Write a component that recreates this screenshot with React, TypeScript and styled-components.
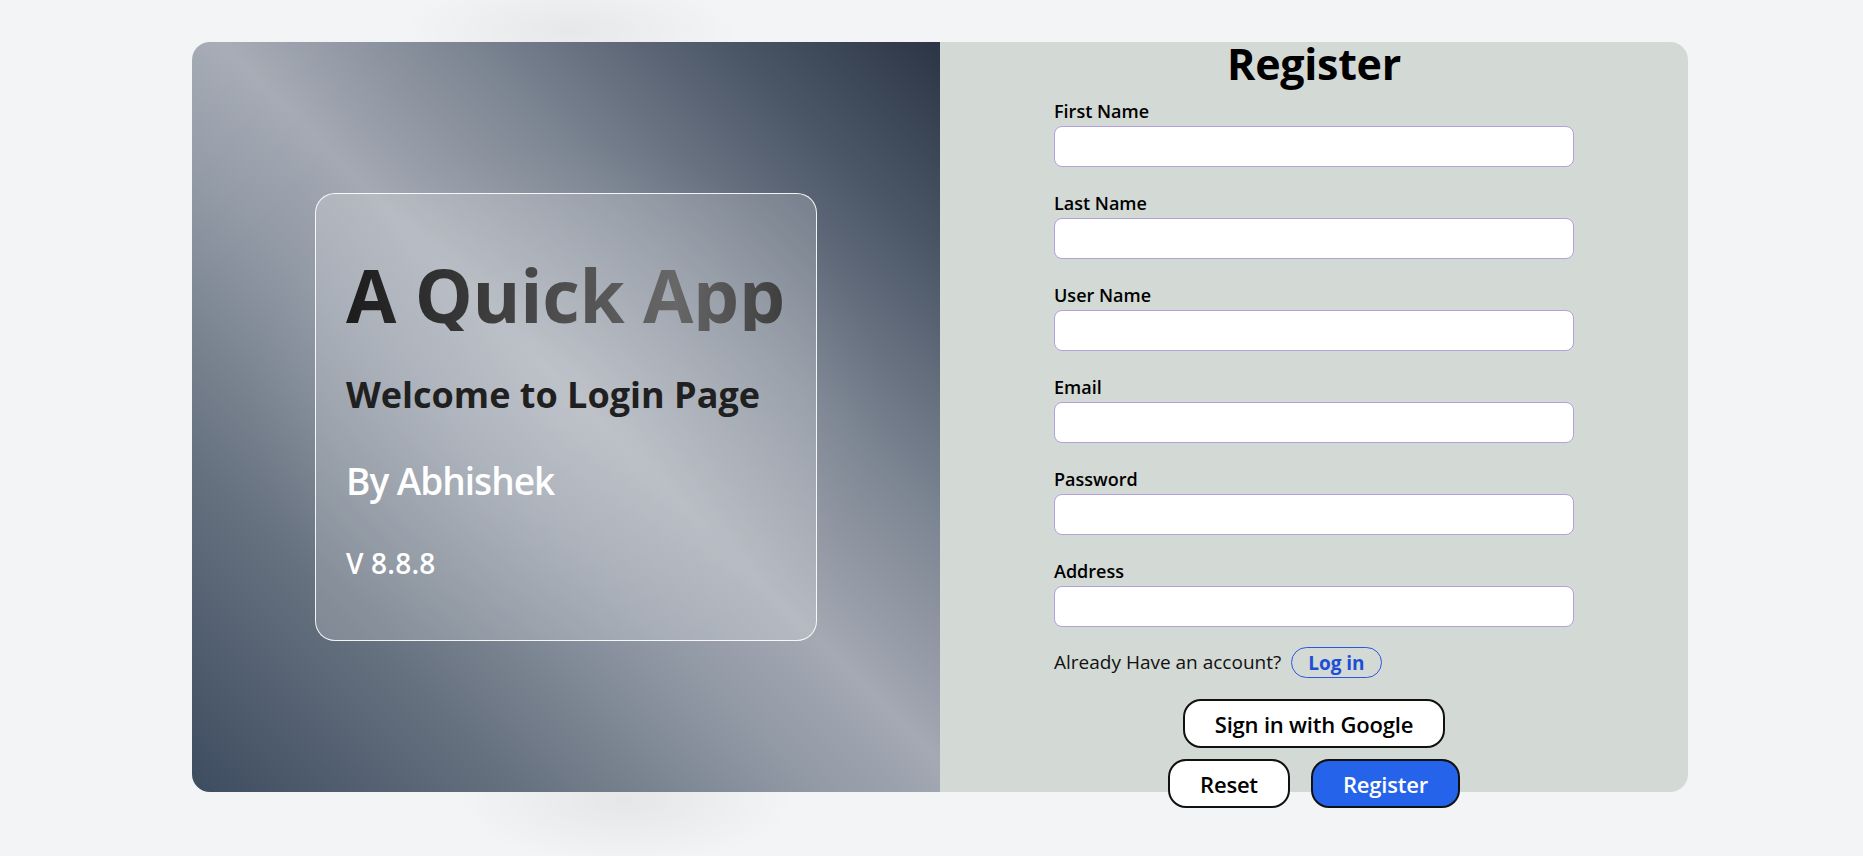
import React from "react";
import styled, { createGlobalStyle } from "styled-components";

const GlobalStyle = createGlobalStyle`
  html, body { margin: 0; padding: 0; }
  body {
    background-color: #f3f4f6;
    background-image:
      radial-gradient(ellipse 170px 55px at 570px 30px, rgba(0,0,0,0.05), rgba(0,0,0,0) 100%),
      radial-gradient(ellipse 170px 65px at 625px 800px, rgba(0,0,0,0.06), rgba(0,0,0,0) 100%);
    background-repeat: no-repeat;
    font-family: "Open Sans", "Noto Sans", sans-serif;
    overflow: hidden;
  }
  * { box-sizing: border-box; }
`;

const Page = styled.div`
  width: 1863px;
  height: 856px;
  padding: 42px 0 0 192px;
`;

const Card = styled.div`
  display: grid;
  grid-template-columns: 748px 748px;
  grid-template-rows: 750px;
  width: 1496px;
  border-radius: 18px;
`;

const Hero = styled.section`
  border-radius: 18px 0 0 18px;
  display: flex;
  align-items: center;
  justify-content: center;
  background:
    radial-gradient(ellipse 320px 260px at 50% 48%, rgba(255,255,255,0.12), rgba(255,255,255,0) 100%),
    linear-gradient(135deg, rgba(255,255,255,0.05) 0%, rgba(255,255,255,0) 18%),
    linear-gradient(45deg, #3e4c60 0%, #66717f 22%, #929aa6 42%, #a4a9b3 52%, #7c8592 68%, #4a5566 86%, #2b3545 100%);
`;

const Glass = styled.div`
  width: 502px;
  height: 448px;
  border: 1px solid rgba(255, 255, 255, 0.9);
  border-radius: 20px;
  background: rgba(255, 255, 255, 0.2);
  display: flex;
  flex-direction: column;
  justify-content: center;
  padding: 0 30px;
`;

const Title = styled.h1`
  margin: 0;
  width: fit-content;
  font-size: 73px;
  line-height: 1;
  font-weight: 700;
  letter-spacing: -0.3px;
  background: linear-gradient(90deg, #1c1c1c 0%, #4a4a4a 45%, #676767 75%, #3e3e3e 100%);
  -webkit-background-clip: text;
  background-clip: text;
  color: transparent;
`;

const Welcome = styled.h2`
  margin: 46px 0 0;
  font-size: 36px;
  line-height: 1;
  font-weight: 700;
  letter-spacing: 0;
  color: #202020;
`;

const Author = styled.h3`
  margin: 49px 0 0;
  font-size: 37px;
  line-height: 1;
  font-weight: 600;
  letter-spacing: -1px;
  color: #ffffff;
`;

const Version = styled.h4`
  margin: 50px 0 0;
  font-size: 28px;
  line-height: 1;
  font-weight: 600;
  letter-spacing: 0.2px;
  color: #ffffff;
`;

const FormPanel = styled.section`
  background: #d3d9d4;
  border-radius: 0 18px 18px 0;
  display: flex;
  flex-direction: column;
  align-items: center;
  min-height: 0;
`;

const Heading = styled.h1`
  margin: 0;
  font-size: 43px;
  line-height: 1;
  font-weight: 700;
  letter-spacing: -0.3px;
  color: #000;
`;

const Form = styled.form`
  width: 520px;
  margin-top: 12px;
  display: flex;
  flex-direction: column;
  gap: 22px;
`;

const Field = styled.div`
  display: flex;
  flex-direction: column;
`;

const Label = styled.label`
  font-size: 18px;
  line-height: 28px;
  font-weight: 600;
  letter-spacing: 0;
  color: #000;
  margin-bottom: 1px;
`;

const Input = styled.input`
  height: 41px;
  width: 100%;
  border: 1px solid #b3a1dc;
  border-radius: 8px;
  background: #fff;
  padding: 0 12px;
  font-family: inherit;
  font-size: 16px;
  outline: none;
`;

const LoginRow = styled.div`
  display: flex;
  align-items: center;
  gap: 10px;
  height: 31px;
  margin-top: -2px;
  font-size: 19px;
  line-height: 27px;
  color: #111;
  letter-spacing: 0;
`;

const LoginLink = styled.button`
  height: 31px;
  padding: 0 16px;
  border: 1px solid #2f55e6;
  border-radius: 999px;
  background: transparent;
  color: #1d4ed8;
  font-family: inherit;
  font-size: 19px;
  font-weight: 700;
  letter-spacing: 0;
  cursor: pointer;
`;

const Actions = styled.div`
  display: flex;
  flex-direction: column;
  align-items: center;
  gap: 11px;
  margin-top: -1px;
`;

const ButtonRow = styled.div`
  display: flex;
  gap: 21px;
`;

const Button = styled.button<{ $primary?: boolean }>`
  height: 49px;
  padding: 0 30px;
  border: 2px solid #111;
  border-radius: 18px;
  background: ${(p) => (p.$primary ? "#2563eb" : "#ffffff")};
  color: ${(p) => (p.$primary ? "#ffffff" : "#000000")};
  font-family: inherit;
  font-size: 22px;
  font-weight: 600;
  letter-spacing: -0.2px;
  cursor: pointer;
`;

const fields = ["First Name", "Last Name", "User Name", "Email", "Password", "Address"];

export default function App() {
  return (
    <>
      <GlobalStyle />
      <Page>
        <Card>
          <Hero>
            <Glass>
              <Title>A Quick App</Title>
              <Welcome>Welcome to Login Page</Welcome>
              <Author>By Abhishek</Author>
              <Version>V 8.8.8</Version>
            </Glass>
          </Hero>
          <FormPanel>
            <Heading>Register</Heading>
            <Form onSubmit={(e) => e.preventDefault()}>
              {fields.map((f) => (
                <Field key={f}>
                  <Label>{f}</Label>
                  <Input type={f === "Password" ? "password" : f === "Email" ? "email" : "text"} />
                </Field>
              ))}
              <LoginRow>
                Already Have an account?
                <LoginLink type="button">Log in</LoginLink>
              </LoginRow>
              <Actions>
                <Button type="button">Sign in with Google</Button>
                <ButtonRow>
                  <Button type="reset">Reset</Button>
                  <Button type="submit" $primary>
                    Register
                  </Button>
                </ButtonRow>
              </Actions>
            </Form>
          </FormPanel>
        </Card>
      </Page>
    </>
  );
}
